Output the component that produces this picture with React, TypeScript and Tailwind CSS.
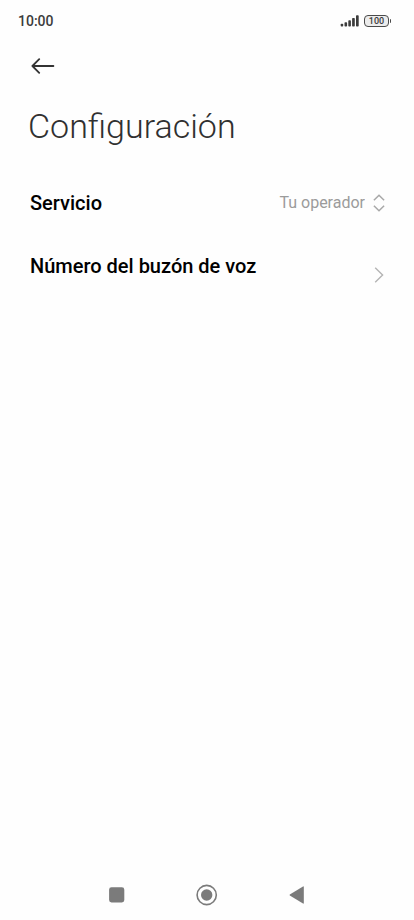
const StatusBar = () => {
  return (
    <div className="flex h-[42px] items-center justify-between pr-[23px] pl-[18px] text-[#3c3c3c]">
      <span className="text-sm font-medium">10:00</span>
      <div className="flex items-center gap-[5px]">
        <svg width="19" height="12" viewBox="0 0 19 12" fill="currentColor" aria-hidden="true">
          <rect x="0.7" y="8.8" width="2.5" height="2.7" rx="0.8" />
          <rect x="4.5" y="7.3" width="2.6" height="4.2" rx="0.8" />
          <rect x="8.3" y="5.3" width="2.6" height="6.2" rx="0.8" />
          <rect x="12.1" y="3" width="2.7" height="8.5" rx="0.8" />
          <rect x="16" y="0.3" width="2.7" height="11.2" rx="0.8" />
        </svg>
        <div className="flex items-center gap-px">
          <span className="flex h-3 w-[25px] items-center justify-center rounded-[4px] border border-[#4a4a4a] bg-[#ececec] text-[9px] leading-none font-medium">
            100
          </span>
          <span className="h-1 w-px rounded-r-full bg-[#4a4a4a]" />
        </div>
      </div>
    </div>
  );
};

const ServiceRow = () => {
  return (
    <div className="flex h-[74px] items-center justify-between pr-[29px] pl-[30px]">
      <label htmlFor="service" className="text-xl font-medium">
        Servicio
      </label>
      <div className="flex items-center gap-2 text-[#9b9b9b]">
        <select
          id="service"
          className="field-sizing-content appearance-none bg-transparent text-base outline-none"
        >
          <option>Tu operador</option>
        </select>
        <svg
          width="12"
          height="18"
          viewBox="0 0 12 18"
          fill="none"
          stroke="#a8a8a8"
          strokeWidth="1.5"
          aria-hidden="true"
        >
          <path d="M0.9 6.2L6 1.2L11.1 6.2" />
          <path d="M0.9 11.8L6 16.8L11.1 11.8" />
        </svg>
      </div>
    </div>
  );
};

const VoicemailRow = () => {
  return (
    <button
      type="button"
      className="flex h-[70px] w-full items-center justify-between pr-[30px] pl-[30px] text-left"
    >
      <span className="pb-[18px] text-xl font-medium">Número del buzón de voz</span>
      <svg
        width="10"
        height="16"
        viewBox="0 0 10 16"
        fill="none"
        stroke="#b4b4b4"
        strokeWidth="1.4"
        aria-hidden="true"
      >
        <path d="M1.2 0.8L8.6 8L1.2 15.2" />
      </svg>
    </button>
  );
};

const NavBar = () => {
  return (
    <nav className="flex h-[50px] items-center justify-center text-[#7b7b7b]">
      <button type="button" aria-label="Recientes" className="flex h-full w-[90px] items-center justify-center">
        <svg width="16" height="16" viewBox="0 0 16 16" fill="currentColor">
          <rect x="0.1" y="0.3" width="15.2" height="15.2" rx="2.4" />
        </svg>
      </button>
      <button type="button" aria-label="Inicio" className="flex h-full w-[90px] items-center justify-center">
        <svg width="22" height="22" viewBox="0 0 22 22">
          <circle cx="10.7" cy="11" r="9.6" fill="none" stroke="currentColor" strokeWidth="1.6" />
          <circle cx="10.7" cy="11" r="5.7" fill="currentColor" />
        </svg>
      </button>
      <button type="button" aria-label="Volver" className="flex h-full w-[90px] items-center justify-center">
        <svg width="16" height="18" viewBox="0 0 16 18" fill="currentColor">
          <path d="M14 0.4Q14.8 0.1 14.8 1V17Q14.8 17.9 14 17.6L0.8 9.5Q0.3 9 0.8 8.5Z" />
        </svg>
      </button>
    </nav>
  );
};

export default function App() {
  return (
    <div className="flex min-h-screen flex-col bg-[#fefefe] font-['Roboto','Noto_Sans',sans-serif] text-black">
      <StatusBar />
      <header className="px-[28px]">
        <button type="button" aria-label="Atrás" className="flex h-12 items-center px-[3px]">
          <svg
            width="24"
            height="16"
            viewBox="0 0 24 16"
            fill="none"
            stroke="#333333"
            strokeWidth="1.8"
            strokeLinecap="round"
            strokeLinejoin="round"
          >
            <path d="M22.4 8H1.4M8.2 1.2L1.4 8L8.2 14.8" />
          </svg>
        </button>
        <h1 className="pt-3 text-[34px] leading-[48px] font-light text-[#303030]">Configuración</h1>
      </header>
      <main className="flex-1 pt-4">
        <ServiceRow />
        <VoicemailRow />
      </main>
      <NavBar />
    </div>
  );
}
